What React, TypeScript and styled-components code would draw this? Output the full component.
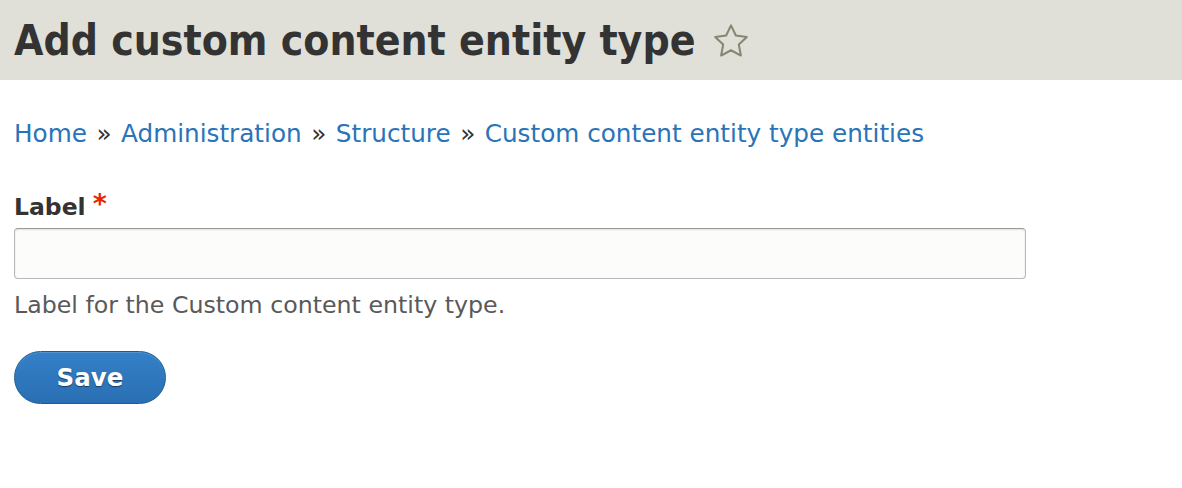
import React from "react";
import styled, { createGlobalStyle } from "styled-components";

const Global = createGlobalStyle`
  html, body { margin: 0; padding: 0; background: #fff; }
  body { font-family: "DejaVu Sans", Verdana, sans-serif; color: #333; }
`;

const Header = styled.header`
  background: #e0e0d8;
  height: 80px;
  display: flex;
  align-items: center;
  padding: 0 14px;
  box-sizing: border-box;
`;

const Title = styled.h1`
  margin: 0;
  font-family: "DejaVu Sans Condensed", "DejaVu Sans", sans-serif;
  font-stretch: condensed;
  font-weight: 700;
  font-size: 42.3px;
  line-height: 1;
  color: #333;
  display: flex;
  align-items: center;
  gap: 17px;
  padding-top: 2px;
`;

const Main = styled.main`
  padding: 39px 14px 0;
`;

const Crumbs = styled.nav`
  font-size: 24.7px;
  line-height: 29px;
  color: #333;
  display: flex;
  gap: 9.5px;
  align-items: baseline;
`;

const Link = styled.a`
  color: #2974b9;
  text-decoration: none;
`;

const Field = styled.div`
  margin-top: 45px;
  display: flex;
  flex-direction: column;
`;

const Label = styled.label`
  font-weight: 700;
  font-size: 23.5px;
  line-height: 29px;
  color: #333;
  display: flex;
  align-items: flex-start;
  gap: 7px;
`;

const Req = styled.span`
  color: #e62600;
  font-size: 27px;
  line-height: 1;
  margin-top: -3px;
`;

const Input = styled.input`
  margin-top: 6px;
  width: 1012px;
  height: 51px;
  box-sizing: border-box;
  border: 1px solid #b8b8b8;
  border-top-color: #999;
  border-radius: 4px;
  background: #fcfcfa;
  box-shadow: inset 0 1px 2px rgba(0,0,0,0.12);
  font-size: 21px;
  padding: 0 10px;
`;

const Desc = styled.div`
  margin-top: 12px;
  font-size: 23.7px;
  line-height: 29px;
  color: #595959;
`;

const SaveButton = styled.button`
  margin-top: 31px;
  width: 152px;
  height: 53px;
  border-radius: 27px;
  border: 1px solid #1e5c90;
  background: linear-gradient(to bottom, #3480c8 0%, #2a6fb3 100%);
  color: #fff;
  font-family: "DejaVu Sans", sans-serif;
  font-weight: 700;
  font-size: 24.5px;
  text-shadow: 0 1px 1px rgba(0,0,0,0.5);
  box-shadow: inset 0 1px 0 rgba(255,255,255,0.15);
  cursor: pointer;
  padding: 0;
`;

const Star = () => (
  <svg width="38" height="36" viewBox="0 0 24 23" fill="none" stroke="#868672" strokeWidth="1.3" strokeLinejoin="round">
    <path d="M12 1.5l3.1 6.5 7 .9-5.1 4.9 1.3 7-6.3-3.4-6.3 3.4 1.3-7L1.9 8.9l7-.9z" />
  </svg>
);

export default function App() {
  return (
    <>
      <Global />
      <Header>
        <Title>
          Add custom content entity type <Star />
        </Title>
      </Header>
      <Main>
        <Crumbs>
          <Link href="#">Home</Link>»<Link href="#">Administration</Link>»
          <Link href="#">Structure</Link>»<Link href="#">Custom content entity type entities</Link>
        </Crumbs>
        <Field>
          <Label>
            Label <Req>*</Req>
          </Label>
          <Input type="text" />
          <Desc>Label for the Custom content entity type.</Desc>
        </Field>
        <SaveButton>Save</SaveButton>
      </Main>
    </>
  );
}
